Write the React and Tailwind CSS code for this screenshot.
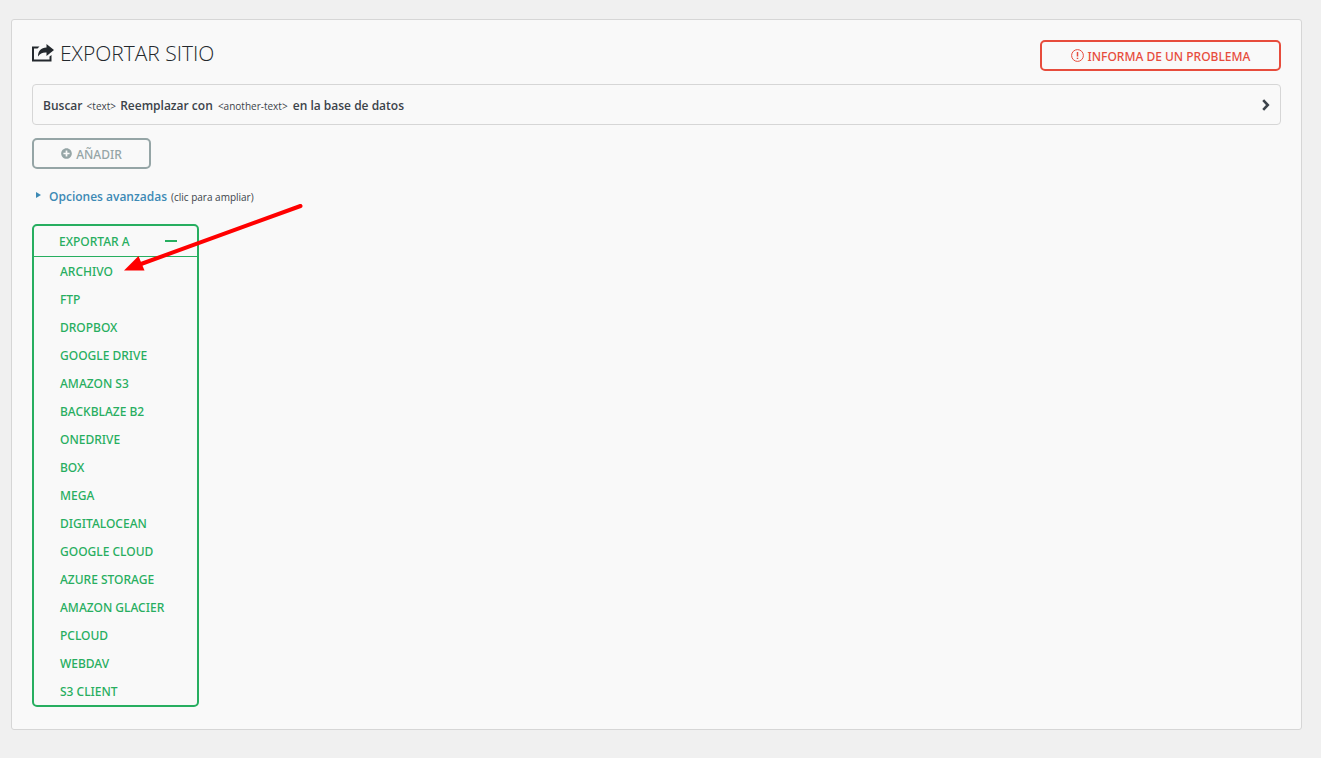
import React, { useState } from 'react';
import { FaPlusCircle } from 'react-icons/fa';

const PROVIDERS = [
    'Archivo',
    'FTP',
    'Dropbox',
    'Google Drive',
    'Amazon S3',
    'Backblaze B2',
    'OneDrive',
    'Box',
    'Mega',
    'DigitalOcean',
    'Google Cloud',
    'Azure Storage',
    'Amazon Glacier',
    'pCloud',
    'WebDAV',
    'S3 Client',
];

function ShareIcon() {
    return (
        <svg className="h-[18px] w-[22px]" viewBox="0 0 22 18" fill="currentColor" aria-hidden="true">
            <path d="M0 2.500H7.500L5.500 4.500H2V15.500H17.500V12.500L19.500 11V17.500H0Z" />
            <path d="M14.500 0 22 6 14.500 12V8.500C10.500 8.300 8 9.300 6 12.500 6 7 9 3.500 14.500 3.500Z" />
        </svg>
    );
}

function AlertIcon() {
    return (
        <svg className="mb-[2px] h-[13px] w-[13px]" viewBox="0 0 13 13" fill="none" stroke="currentColor" aria-hidden="true">
            <circle cx="6.5" cy="6.5" r="5.9" />
            <path d="M6.5 3v4.5M6.5 8.700v1.300" strokeWidth="1.5" />
        </svg>
    );
}

function ChevronIcon() {
    return (
        <svg className="h-3 w-2" viewBox="0 0 8 12" fill="none" stroke="currentColor" strokeWidth="2.6" aria-hidden="true">
            <path d="M1.2 1.2 5.8 6 1.2 10.8" />
        </svg>
    );
}

// Red pointer from the margin to the first export target
function Pointer() {
    return (
        <svg
            className="pointer-events-none absolute -top-[22px] left-[89px] h-[68px] w-[180px]"
            viewBox="0 0 180 68"
            aria-hidden="true"
        >
            <path d="M18 60 177.500 2" stroke="#ff0000" strokeWidth="4" strokeLinecap="round" />
            <path d="M1 66.500 15.500 52 21.500 66.500Z" fill="#ff0000" />
        </svg>
    );
}

export default function App() {
    const [open, setOpen] = useState(true);

    return (
        <div className="min-h-screen bg-[#f0f0f0] pt-[19px] pr-[19px] pb-7 pl-[11px] font-['Open_Sans','Noto_Sans',sans-serif] text-[#3c434a]">
            <main className="rounded-[3px] border border-[#d6d6d6] bg-[#f9f9f9] p-5 pb-[22px]">
                <header className="mb-[13px] flex items-start justify-between">
                    <h1 className="flex items-center gap-[6px] text-[21px] leading-[26px] font-light text-[#23282d] uppercase">
                        <ShareIcon />
                        Exportar sitio
                    </h1>
                    <button
                        type="button"
                        className="flex h-[31px] w-[241px] items-center justify-center gap-1 rounded-[5px] border-2 border-[#e74c3c] pt-[2px] font-['Noto_Sans',sans-serif] text-xs font-medium text-[#e74c3c] uppercase"
                    >
                        <AlertIcon />
                        Informa de un problema
                    </button>
                </header>

                <button
                    type="button"
                    className="mb-[13px] flex h-[41px] w-full items-center justify-between rounded-[4px] border border-[#d6d6d6] px-[10px] text-left text-xs font-semibold"
                >
                    <span className="pt-[2px]">
                        Buscar <small className="mx-px text-[10px] font-normal">&lt;text&gt;</small> Reemplazar con{' '}
                        <small className="mx-[2px] text-[10px] font-normal">&lt;another-text&gt;</small> en la base de datos
                    </span>
                    <ChevronIcon />
                </button>

                <button
                    type="button"
                    className="flex h-[31px] w-[119px] items-center justify-center gap-1 rounded-[5px] border-2 border-[#95a5a6] pt-[2px] font-['Noto_Sans',sans-serif] text-xs font-medium text-[#95a5a6] uppercase"
                >
                    <FaPlusCircle className="mb-[2px] h-[11px] w-[11px]" />
                    Añadir
                </button>

                <button type="button" className="mt-[19px] flex items-baseline pl-1 text-[10px] leading-[18px]">
                    <svg className="mr-2 h-[10px] w-[5px]" viewBox="0 0 5 10" fill="#3d8ab5" aria-hidden="true">
                        <path d="M0 1 5 4 0 7Z" />
                    </svg>
                    <span className="mr-1 text-xs leading-[18px] font-semibold text-[#3d8ab5]">Opciones avanzadas</span>
                    (clic para ampliar)
                </button>

                <div className="relative mt-[18px] w-[167px] rounded-[5px] border-2 border-[#27ae60] font-['Noto_Sans',sans-serif] text-xs font-medium text-[#27ae60] uppercase">
                    <button
                        type="button"
                        aria-expanded={open}
                        onClick={() => setOpen(!open)}
                        className="flex h-[31px] w-full items-center justify-between border-b border-[#27ae60] pr-5 pl-[25px] uppercase"
                    >
                        <span className="pt-[2px]">Exportar a</span>
                        <span className="h-[2px] w-3 bg-[#27ae60]"></span>
                    </button>
                    {open && (
                        <ul>
                            {PROVIDERS.map((name) => (
                                <li key={name}>
                                    <a href="#" className="flex h-7 items-center pt-[2px] pl-[26px]">
                                        {name}
                                    </a>
                                </li>
                            ))}
                        </ul>
                    )}
                    <Pointer />
                </div>
            </main>
        </div>
    );
}
